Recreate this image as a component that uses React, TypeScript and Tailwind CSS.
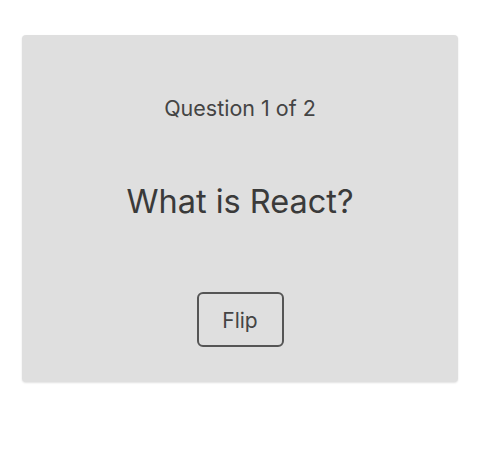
export default function App() {
  return (
    <div className="w-[480px] h-[468px] bg-white px-[22px] pt-[35px]" style={{ fontFamily: "Inter, 'Noto Sans', sans-serif" }}>
      <div className="w-[436px] h-[347px] bg-[#dfdfdf] rounded-[4px] shadow-[0_1px_2px_rgba(0,0,0,0.12)] flex flex-col items-center pt-[59px]">
        <div className="text-[21.5px] leading-[28px] text-[#444444]">Question 1 of 2</div>
        <div className="mt-[60px] text-[32.5px] leading-[40px] text-[#3a3a3a]">What is React?</div>
        <button className="mt-[70px] w-[87px] h-[55px] border-2 border-[#555555] rounded-[6px] text-[21px] text-[#444444] flex items-center justify-center pt-[3px]">Flip</button>
      </div>
    </div>
  );
}
